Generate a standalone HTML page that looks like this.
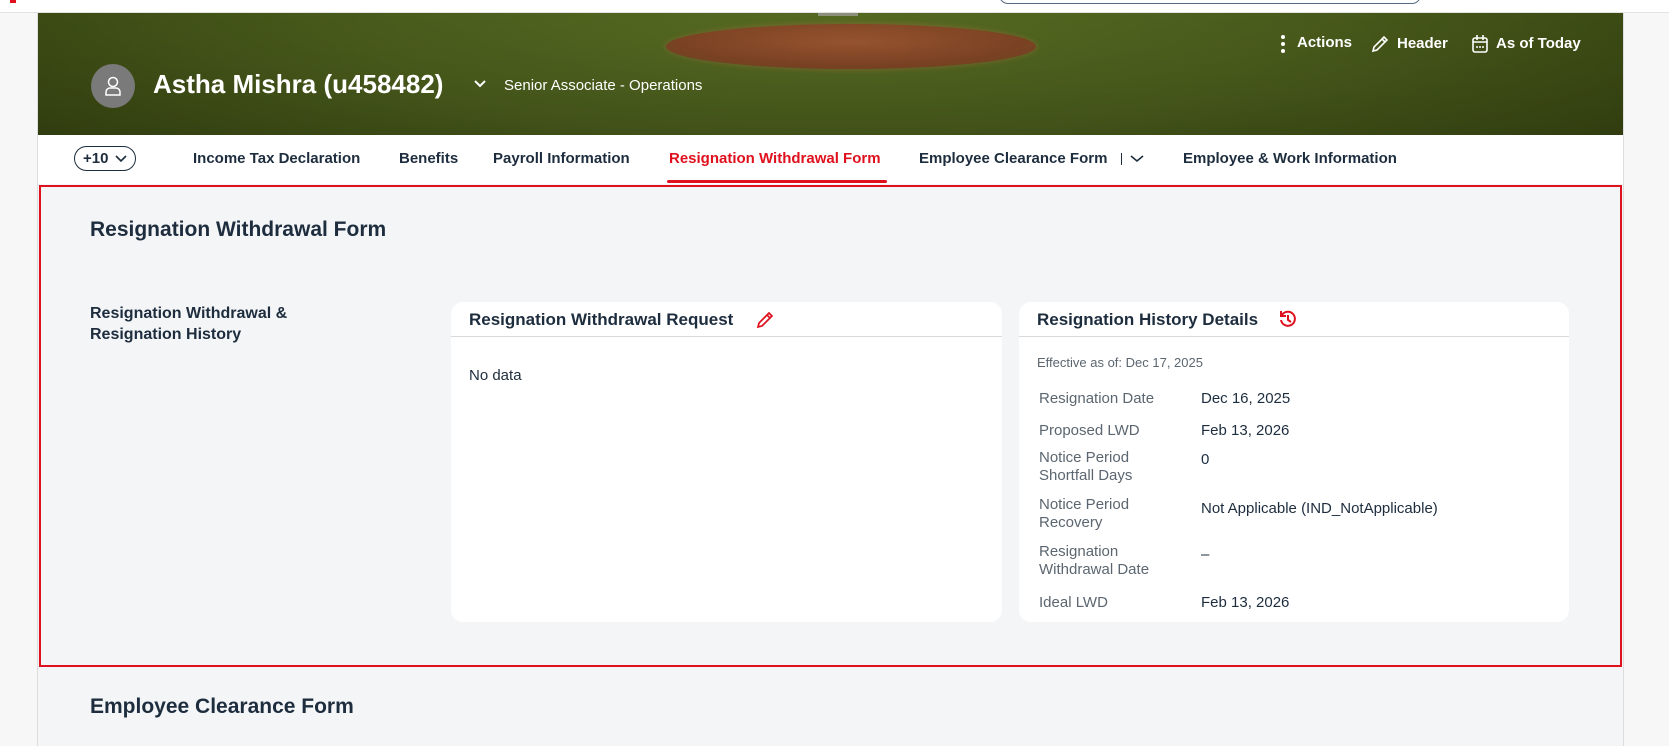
<!DOCTYPE html>
<html><head><meta charset="utf-8"><style>
*{margin:0;padding:0;box-sizing:border-box}
body{width:1669px;height:746px;overflow:hidden;background:#f7f7f7;font-family:"Liberation Sans",Arial,sans-serif;color:#1d2d3e;position:relative}
.abs{position:absolute;white-space:nowrap}
.top{position:absolute;left:0;top:0;width:1669px;height:13px;background:#fff;border-bottom:1px solid #e2e2e2}
.search{position:absolute;left:999px;top:-14px;width:422px;height:18px;border:1.5px solid #556b82;border-radius:9px;background:#fff}
.banner{position:absolute;left:38px;top:13px;width:1585px;height:122px;overflow:hidden;
background:radial-gradient(ellipse 1000px 220px at 50% 20%,#566b22 0%,#4a5c1c 45%,#33400f 100%)}
.mound{position:absolute;left:628px;top:11px;width:370px;height:45px;border-radius:50%;background:radial-gradient(ellipse at 50% 40%,#9a5530,#7e4424 65%,#6a4a22);box-shadow:0 0 4px 2px #6f6a2a}
.shade{position:absolute;left:0;top:0;width:100%;height:100%;background:linear-gradient(180deg,rgba(0,0,0,0) 0%,rgba(0,0,0,.12) 100%)}
.nav{position:absolute;left:38px;top:135px;width:1585px;height:49px;background:#fff}
.tab{position:absolute;top:150px;font-size:15px;font-weight:bold;color:#1d2d3e}
.main{position:absolute;left:38px;top:184px;width:1585px;height:562px;background:#f4f5f7}
.redbox{position:absolute;left:39px;top:185px;width:1583px;height:482px;border:2px solid #e0111e}
.card{position:absolute;top:302px;height:320px;background:#fff;border-radius:12px}
.ch{position:absolute;left:0;top:0;width:100%;height:35px;border-bottom:1px solid #d9d9d9}
.lbl{position:absolute;left:20px;font-size:15px;color:#5b6670;line-height:18px}
.val{position:absolute;left:182px;font-size:15px;color:#1d2d3e}
</style></head><body>
<div class="top"></div>
<div class="search"></div>
<div class="abs" style="left:10px;top:0;width:6px;height:3px;background:#e0111e"></div>
<div class="abs" style="left:1623px;top:13px;width:1px;height:733px;background:#ddd"></div>
<div class="abs" style="left:37px;top:13px;width:1px;height:733px;background:#ddd"></div>
<div class="banner">
 <div class="mound"></div>
 <div class="abs" style="left:780px;top:0;width:40px;height:3px;background:#8c8f7a"></div>
 <div class="shade"></div>
</div>
<!-- avatar -->
<div class="abs" style="left:91px;top:64px;width:44px;height:44px;border-radius:50%;background:#7a7a7a"></div>
<svg class="abs" style="left:103px;top:75px" width="20" height="22" viewBox="0 0 20 22"><circle cx="10" cy="7" r="4.5" fill="none" stroke="#fff" stroke-width="1.5"/><path d="M3 20v-3a4 4 0 0 1 4-4h6a4 4 0 0 1 4 4v3z" fill="none" stroke="#fff" stroke-width="1.5"/></svg>
<div class="abs" style="left:153px;top:69px;font-size:26px;font-weight:bold;color:#fff">Astha Mishra (u458482)</div>
<svg class="abs" style="left:473px;top:79px" width="14" height="10"><path d="M2 2l5 5 5-5" fill="none" stroke="#fff" stroke-width="2"/></svg>
<div class="abs" style="left:504px;top:77px;font-size:15px;color:#fff">Senior Associate - Operations</div>
<!-- actions -->
<svg class="abs" style="left:1280px;top:34px" width="6" height="20"><circle cx="3" cy="3" r="2" fill="#fff"/><circle cx="3" cy="10" r="2" fill="#fff"/><circle cx="3" cy="17" r="2" fill="#fff"/></svg>
<div class="abs" style="left:1297px;top:34px;font-size:15px;font-weight:bold;color:#fff">Actions</div>
<svg class="abs" style="left:1370px;top:34px" width="20" height="20"><path d="M3 17l1-4L14 3l3 3L7 16z M12 5l3 3" fill="none" stroke="#fff" stroke-width="1.6"/></svg>
<div class="abs" style="left:1397px;top:35px;font-size:15px;font-weight:bold;color:#fff">Header</div>
<svg class="abs" style="left:1471px;top:34px" width="18" height="20"><rect x="2" y="4" width="14" height="14" rx="2" fill="none" stroke="#fff" stroke-width="1.6"/><path d="M2 8h14M6 1v5M12 1v5" stroke="#fff" stroke-width="1.6"/><path d="M5 13h2M8 13h2M11 13h2" stroke="#fff" stroke-width="1.5"/></svg>
<div class="abs" style="left:1496px;top:35px;font-size:15px;font-weight:bold;color:#fff">As of Today</div>
<!-- nav -->
<div class="nav"></div>
<div class="abs" style="left:74px;top:146px;width:62px;height:25px;border:1.5px solid #1d2d3e;border-radius:13px;background:#fff"></div>
<div class="abs" style="left:83px;top:150px;font-size:15px;font-weight:bold">+10</div>
<svg class="abs" style="left:115px;top:154px" width="12" height="9"><path d="M1 2l5 5 5-5" fill="none" stroke="#1d2d3e" stroke-width="1.6"/></svg>
<div class="tab" style="left:193px">Income Tax Declaration</div>
<div class="tab" style="left:399px">Benefits</div>
<div class="tab" style="left:493px">Payroll Information</div>
<div class="tab" style="left:669px;color:#e0111e">Resignation Withdrawal Form</div>
<div class="abs" style="left:667px;top:180px;width:220px;height:3px;background:#e0111e;border-radius:2px"></div>
<div class="tab" style="left:919px">Employee Clearance Form</div>
<div class="abs" style="left:1121px;top:153px;width:1px;height:12px;background:#1d2d3e"></div>
<svg class="abs" style="left:1130px;top:154px" width="14" height="9"><path d="M1 2l6 5 6-5" fill="none" stroke="#1d2d3e" stroke-width="1.6"/></svg>
<div class="tab" style="left:1183px">Employee &amp; Work Information</div>
<!-- main -->
<div class="main"></div>
<div class="redbox"></div>
<div class="abs" style="left:90px;top:218px;font-size:21px;font-weight:bold">Resignation Withdrawal Form</div>
<div class="abs" style="left:90px;top:303px;font-size:16px;font-weight:bold;line-height:21px">Resignation Withdrawal &amp;<br>Resignation History</div>
<div class="card" style="left:451px;width:551px">
 <div class="ch"></div>
 <div class="abs" style="left:18px;top:8px;font-size:17px;font-weight:bold">Resignation Withdrawal Request</div>
 <svg class="abs" style="left:304px;top:8px" width="20" height="20"><path d="M3 17l1-4L14 3l3 3L7 16z M12 5l3 3" fill="none" stroke="#e0111e" stroke-width="1.7"/></svg>
 <div class="abs" style="left:18px;top:65px;font-size:15px">No data</div>
</div>
<div class="card" style="left:1019px;width:550px">
 <div class="ch"></div>
 <div class="abs" style="left:18px;top:8px;font-size:17px;font-weight:bold">Resignation History Details</div>
 <svg class="abs" style="left:259px;top:7px" width="20" height="20"><path d="M4 6A7 7 0 1 1 3 11" fill="none" stroke="#e0111e" stroke-width="2"/><path d="M3 2v5h5" fill="none" stroke="#e0111e" stroke-width="2"/><path d="M10 6v5l3 2" fill="none" stroke="#e0111e" stroke-width="2"/></svg>
 <div class="abs" style="left:18px;top:53px;font-size:13px;color:#5b6670">Effective as of: Dec 17, 2025</div>
 <div class="lbl" style="top:88px">Resignation Date</div><div class="val" style="top:88px">Dec 16, 2025</div>
 <div class="lbl" style="top:120px">Proposed LWD</div><div class="val" style="top:120px">Feb 13, 2026</div>
 <div class="lbl" style="top:147px">Notice Period<br>Shortfall Days</div><div class="val" style="top:149px">0</div>
 <div class="lbl" style="top:194px">Notice Period<br>Recovery</div><div class="val" style="top:198px">Not Applicable (IND_NotApplicable)</div>
 <div class="lbl" style="top:241px">Resignation<br>Withdrawal Date</div><div class="val" style="top:244px">–</div>
 <div class="lbl" style="top:292px">Ideal LWD</div><div class="val" style="top:292px">Feb 13, 2026</div>
</div>
<div class="abs" style="left:90px;top:695px;font-size:21px;font-weight:bold">Employee Clearance Form</div>
</body></html>
